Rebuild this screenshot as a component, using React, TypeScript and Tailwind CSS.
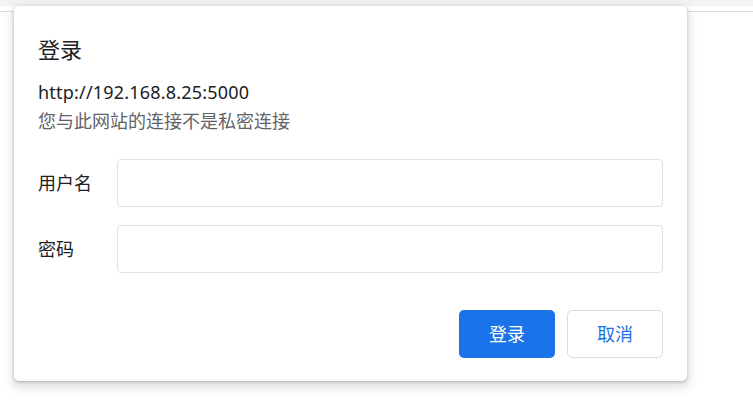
import React from 'react';

export default function App() {
  return (
    <div className="relative w-[753px] h-[419px] bg-white overflow-hidden font-['Noto_Sans','Noto_Sans_CJK_SC',sans-serif] text-[#202124]">
      {/* Browser chrome behind the prompt */}
      <div className="h-[6px] bg-[#f1f3f4]" />
      <div className="h-[5px] bg-white" />
      <div className="h-px bg-[#dadce0]" />

      {/* Auth dialog */}
      <div className="absolute left-[14px] top-[6px] w-[673px] bg-white rounded-[5px] shadow-[0_1px_3px_rgba(60,64,67,0.3),0_4px_8px_3px_rgba(60,64,67,0.15)] px-6 pt-[28px] pb-[23px]">
        <h1 className="text-[22px] leading-[30px] font-normal">登录</h1>

        <p className="mt-[14px] text-[18px] leading-[28px] tracking-[0.2px]">http://192.168.8.25:5000</p>
        <p className="text-[18px] leading-[30px] text-[#5f6368]">您与此网站的连接不是私密连接</p>

        <div className="mt-[23px] flex flex-col gap-[18px]">
          <div className="flex items-center">
            <label className="w-[79px] shrink-0 text-[18px]">用户名</label>
            <input className="flex-1 h-[48px] rounded-[4px] border border-[#e0e0e0] outline-none px-3" />
          </div>
          <div className="flex items-center">
            <label className="w-[79px] shrink-0 text-[18px]">密码</label>
            <input type="password" className="flex-1 h-[48px] rounded-[4px] border border-[#e0e0e0] outline-none px-3" />
          </div>
        </div>

        <div className="mt-[37px] flex justify-end gap-3">
          <button className="w-[96px] h-[48px] rounded-[5px] bg-[#1a73e8] text-white text-[18px]">登录</button>
          <button className="w-[96px] h-[48px] rounded-[5px] border border-[#dadce0] bg-white text-[#1a73e8] text-[18px]">取消</button>
        </div>
      </div>
    </div>
  );
}
